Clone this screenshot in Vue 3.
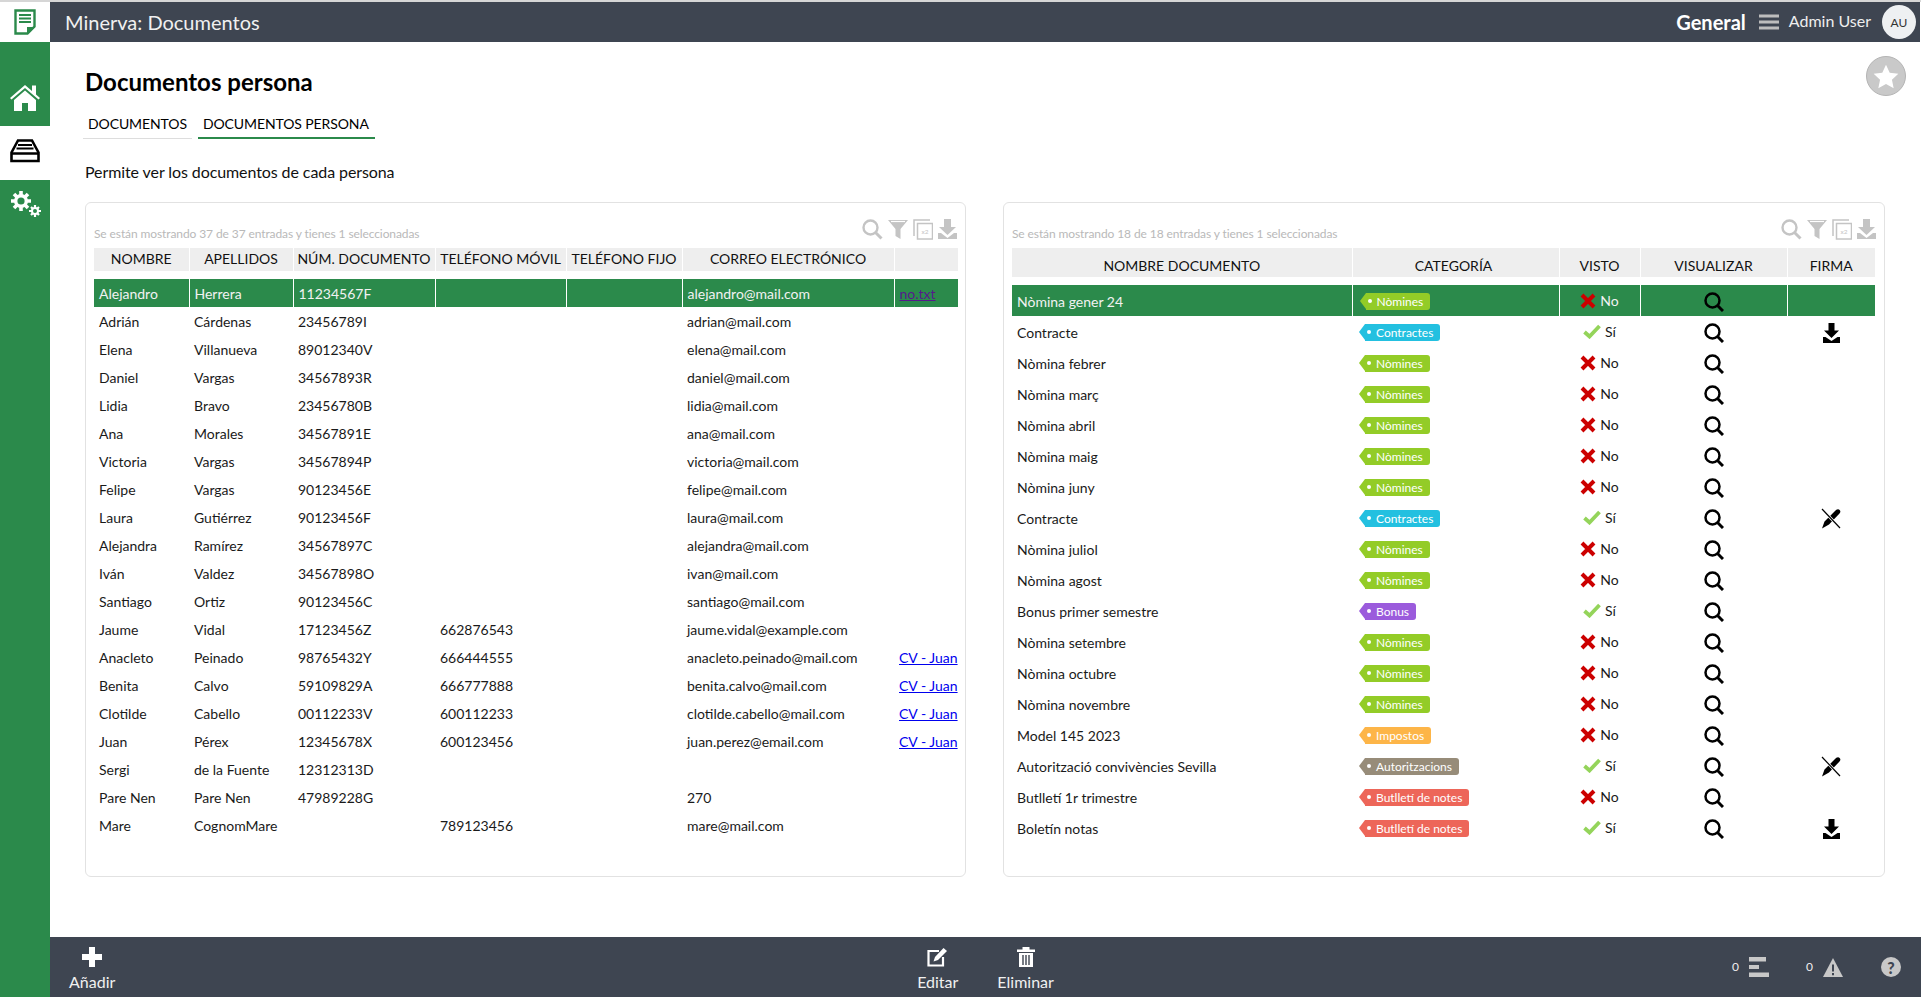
<template>
  <div class="app">
    <aside class="sidebar">
      <div class="side-logo">
        <svg width="22" height="26" viewBox="0 0 22 26"><path d="M1.500 1.500h19v16l-7 7h-12z" fill="#fff" stroke="#2b8a4b" stroke-width="2.400"/><path d="M13 25v-7h8z" fill="#2b8a4b"/><path d="M5 6h12M5 9.500h12M5 13h12" stroke="#2b8a4b" stroke-width="2"/></svg>
      </div>
      <div class="side-item home">
        <svg width="30" height="27" viewBox="0 0 30 27"><path d="M15 1 0 14l1.500 1.500L15 4 28.500 15.500 30 14l-4-3.500V1.500h-4v5.500z" fill="#fff"/><path d="M15 6.500 4 16v11h8v-8h6v8h8V16z" fill="#fff"/></svg>
      </div>
      <div class="side-item inbox">
        <svg width="30" height="24" viewBox="0 0 30 24"><path d="M8 1.500h14l6.500 12v8.500h-27v-8.500z" fill="none" stroke="#000" stroke-width="2.600"/><path d="M8 6h14M6.500 9.500h17" stroke="#000" stroke-width="2"/><path d="M2 14.500h26" stroke="#000" stroke-width="2.500"/></svg>
      </div>
      <div class="side-item gears">
        <svg width="31" height="26" viewBox="0 0 31 26"><g fill="#fff"><circle cx="11" cy="10" r="7"/><g stroke="#fff" stroke-width="3.600"><path d="M11 0v20M1 10h20M4 3l14 14M18 3 4 17"/></g><circle cx="25" cy="20" r="4"/><g stroke="#fff" stroke-width="2.200"><path d="M25 14v12M19 20h12M21 16l8 8M29 16l-8 8"/></g></g><circle cx="11" cy="10" r="3.600" fill="#2b8a4b"/><circle cx="25" cy="20" r="2" fill="#2b8a4b"/></svg>
      </div>
    </aside>

    <div class="main">
      <header class="topbar">
        <div class="app-title">Minerva: Documentos</div>
        <div class="top-right">
          <span class="general">General</span>
          <svg class="burger" width="20" height="16" viewBox="0 0 20 16"><path d="M0 2h20M0 8h20M0 14h20" stroke="#bdbdbd" stroke-width="3"/></svg>
          <span class="user">Admin User</span>
          <span class="avatar">AU</span>
        </div>
      </header>

      <main class="content">
        <div class="title-row">
          <h1>Documentos persona</h1>
          <div class="fav">
            <svg width="26" height="25" viewBox="0 0 30 29"><path d="m15 1 4.300 9.200 10 1.200-7.400 6.900 2 9.900L15 23.300l-8.900 4.900 2-9.900-7.400-6.900 10-1.200z" fill="#fff"/></svg>
          </div>
        </div>

        <nav class="tabs">
          <a class="tab">DOCUMENTOS</a>
          <a class="tab active">DOCUMENTOS PERSONA</a>
        </nav>

        <p class="desc">Permite ver los documentos de cada persona</p>

        <div class="panels">
          <section class="panel">
            <div class="panel-top">
              <span class="status">Se están mostrando 37 de 37 entradas y tienes 1 seleccionadas</span>
              <div class="tools">
                <svg width="21" height="21" viewBox="0 0 21 21"><circle cx="8.500" cy="8.500" r="7" fill="none" stroke="#c4c4c4" stroke-width="2.400"/><path d="m13.500 13.500 6 6" stroke="#c4c4c4" stroke-width="3"/></svg>
                <svg width="20" height="21" viewBox="0 0 20 21"><path d="M0 1h20l-7.500 9v10l-5-3v-7z" fill="#c4c4c4"/><path d="M3 2.500h14" stroke="#fff" stroke-width="1.200"/></svg>
                <svg width="20" height="21" viewBox="0 0 20 21"><path d="M1 17V1h16" fill="none" stroke="#c4c4c4" stroke-width="1.500"/><rect x="4.500" y="4.500" width="15" height="15.500" fill="#fff" stroke="#c4c4c4" stroke-width="1.500"/><text x="12" y="15" font-size="6.500" fill="#c4c4c4" text-anchor="middle" font-family="Lato">x2</text></svg>
                <svg width="19" height="21" viewBox="0 0 19 21"><path d="M6 0h7v8h5l-8.500 8L1 8h5z" fill="#c4c4c4"/><path d="M0 14h3l6.500 5 6.500-5h3v6H0z" fill="#c4c4c4"/></svg>
              </div>
            </div>
            <table class="grid people">
              <colgroup>
                <col v-for="w in peopleCols" :key="w" :style="{ width: w + 'px' }" />
              </colgroup>
              <thead>
                <tr><th>NOMBRE</th><th>APELLIDOS</th><th>NÚM. DOCUMENTO</th><th>TELÉFONO MÓVIL</th><th>TELÉFONO FIJO</th><th>CORREO ELECTRÓNICO</th><th></th></tr>
              </thead>
              <tbody>
                <tr v-for="(p, i) in people" :key="i" :class="{ selected: i === 0 }">
                  <td>{{ p[0] }}</td>
                  <td>{{ p[1] }}</td>
                  <td>{{ p[2] }}</td>
                  <td>{{ p[3] }}</td>
                  <td></td>
                  <td>{{ p[4] }}</td>
                  <td><a v-if="p[5]" class="doc-link" :class="{ visited: i === 0 }">{{ p[5] }}</a></td>
                </tr>
              </tbody>
            </table>
          </section>

          <section class="panel">
            <div class="panel-top">
              <span class="status">Se están mostrando 18 de 18 entradas y tienes 1 seleccionadas</span>
              <div class="tools">
                <svg width="21" height="21" viewBox="0 0 21 21"><circle cx="8.500" cy="8.500" r="7" fill="none" stroke="#c4c4c4" stroke-width="2.400"/><path d="m13.500 13.500 6 6" stroke="#c4c4c4" stroke-width="3"/></svg>
                <svg width="20" height="21" viewBox="0 0 20 21"><path d="M0 1h20l-7.500 9v10l-5-3v-7z" fill="#c4c4c4"/><path d="M3 2.500h14" stroke="#fff" stroke-width="1.200"/></svg>
                <svg width="20" height="21" viewBox="0 0 20 21"><path d="M1 17V1h16" fill="none" stroke="#c4c4c4" stroke-width="1.500"/><rect x="4.500" y="4.500" width="15" height="15.500" fill="#fff" stroke="#c4c4c4" stroke-width="1.500"/><text x="12" y="15" font-size="6.500" fill="#c4c4c4" text-anchor="middle" font-family="Lato">x2</text></svg>
                <svg width="19" height="21" viewBox="0 0 19 21"><path d="M6 0h7v8h5l-8.500 8L1 8h5z" fill="#c4c4c4"/><path d="M0 14h3l6.500 5 6.500-5h3v6H0z" fill="#c4c4c4"/></svg>
              </div>
            </div>
            <table class="grid docs">
              <colgroup>
                <col v-for="w in docCols" :key="w" :style="{ width: w + 'px' }" />
              </colgroup>
              <thead>
                <tr><th>NOMBRE DOCUMENTO</th><th class="cat-head">CATEGORÍA</th><th>VISTO</th><th>VISUALIZAR</th><th>FIRMA</th></tr>
              </thead>
              <tbody>
                <tr v-for="(d, i) in docs" :key="i" :class="{ selected: i === 0 }">
                  <td>{{ d.name }}</td>
                  <td><span class="tag" :class="d.cat">{{ catLabels[d.cat] }}</span></td>
                  <td class="center">
                    <span class="seen">
                      <svg v-if="d.seen" width="18" height="15" viewBox="0 0 18 15"><path d="m1.500 8 5 4.500L16.500 2" fill="none" stroke="#94d45a" stroke-width="3.800"/></svg>
                      <svg v-else width="16" height="16" viewBox="0 0 16 16"><path d="m2 2 12 12M14 2 2 14" stroke="#cc0000" stroke-width="4"/></svg>
                      {{ d.seen ? 'Sí' : 'No' }}
                    </span>
                  </td>
                  <td class="center">
                    <svg class="lens" width="20" height="20" viewBox="0 0 20 20"><circle cx="8.500" cy="8.500" r="7" fill="none" stroke="#000" stroke-width="2.500"/><path d="m13.500 13.500 5.500 5.500" stroke="#000" stroke-width="3"/></svg>
                  </td>
                  <td class="center">
                    <svg v-if="d.sign === 'down'" class="lens" width="17" height="20" viewBox="0 0 17 20"><path d="M5.500 0h6v7.500H16L8.500 15 1 7.500h4.500z" fill="#000"/><path d="M0 14h2.500l6 4 6-4H17v6H0z" fill="#000"/></svg>
                    <svg v-else-if="d.sign === 'pen'" class="lens" width="20" height="21" viewBox="0 0 20 21"><path d="M1 20.500 3.500 13.500 13.500 3.500Q16 .5 18 1.500 20.500 3 18.500 5.500L8 16.500z" fill="#000"/><path d="m1 1 18 19" stroke="#fff" stroke-width="2.600"/><path d="m1 1 18 19" stroke="#000" stroke-width="1.200"/></svg>
                  </td>
                </tr>
              </tbody>
            </table>
          </section>
        </div>
      </main>

      <footer class="actions">
        <div class="act-left">
          <div class="act">
            <svg width="20" height="20" viewBox="0 0 20 20"><path d="M7 0h6v7h7v6h-7v7H7v-7H0V7h7z" fill="#fff"/></svg>
            <span>Añadir</span>
          </div>
        </div>
        <div class="act-center">
          <div class="act">
            <svg width="21" height="20" viewBox="0 0 21 20"><path d="M12 4H1.500v14.500H16V10" fill="none" stroke="#fff" stroke-width="2.200"/><path d="m16.500 1 3.500 3-9 9-4.500 1.500L8 10z" fill="#fff"/></svg>
            <span>Editar</span>
          </div>
          <div class="act">
            <svg width="18" height="20" viewBox="0 0 18 20"><path d="M0 2.500h5.500V0h7v2.500H18V5H0zM2 6h14v14H2z" fill="#fff"/><path d="M6 8v10M9 8v10M12 8v10" stroke="#3e4551" stroke-width="1.400"/></svg>
            <span>Eliminar</span>
          </div>
        </div>
        <div class="act-right">
          <span class="count">0</span>
          <svg width="20" height="20" viewBox="0 0 20 20"><path d="M0 0h17v4.500H0zM0 8h10v4H0zM0 15.500h20V20H0z" fill="#c8c8c8"/></svg>
          <span class="count second">0</span>
          <svg width="20" height="19" viewBox="0 0 20 19"><path d="M10 0 20 19H0z" fill="#c8c8c8"/><path d="M10 6.500v7M10 15v2.300" stroke="#3e4551" stroke-width="2"/></svg>
          <span class="help">?</span>
        </div>
      </footer>
    </div>
  </div>
</template>

<script setup>
const peopleCols = [95, 104, 142, 131, 116, 212, 64]
const docCols = [340, 207, 81, 147, 88]

const people = [
  ['Alejandro', 'Herrera', '11234567F', '', 'alejandro@mail.com', 'no.txt'],
  ['Adrián', 'Cárdenas', '23456789I', '', 'adrian@mail.com'],
  ['Elena', 'Villanueva', '89012340V', '', 'elena@mail.com'],
  ['Daniel', 'Vargas', '34567893R', '', 'daniel@mail.com'],
  ['Lidia', 'Bravo', '23456780B', '', 'lidia@mail.com'],
  ['Ana', 'Morales', '34567891E', '', 'ana@mail.com'],
  ['Victoria', 'Vargas', '34567894P', '', 'victoria@mail.com'],
  ['Felipe', 'Vargas', '90123456E', '', 'felipe@mail.com'],
  ['Laura', 'Gutiérrez', '90123456F', '', 'laura@mail.com'],
  ['Alejandra', 'Ramírez', '34567897C', '', 'alejandra@mail.com'],
  ['Iván', 'Valdez', '34567898O', '', 'ivan@mail.com'],
  ['Santiago', 'Ortiz', '90123456C', '', 'santiago@mail.com'],
  ['Jaume', 'Vidal', '17123456Z', '662876543', 'jaume.vidal@example.com'],
  ['Anacleto', 'Peinado', '98765432Y', '666444555', 'anacleto.peinado@mail.com', 'CV - Juan'],
  ['Benita', 'Calvo', '59109829A', '666777888', 'benita.calvo@mail.com', 'CV - Juan'],
  ['Clotilde', 'Cabello', '00112233V', '600112233', 'clotilde.cabello@mail.com', 'CV - Juan'],
  ['Juan', 'Pérex', '12345678X', '600123456', 'juan.perez@email.com', 'CV - Juan'],
  ['Sergi', 'de la Fuente', '12312313D', '', ''],
  ['Pare Nen', 'Pare Nen', '47989228G', '', '270'],
  ['Mare', 'CognomMare', '', '789123456', 'mare@mail.com']
]

const catLabels = {
  nomines: 'Nòmines',
  contractes: 'Contractes',
  bonus: 'Bonus',
  impostos: 'Impostos',
  autor: 'Autoritzacions',
  butlleti: 'Butlletí de notes'
}

const docs = [
  { name: 'Nòmina gener 24', cat: 'nomines', seen: false },
  { name: 'Contracte', cat: 'contractes', seen: true, sign: 'down' },
  { name: 'Nòmina febrer', cat: 'nomines', seen: false },
  { name: 'Nòmina març', cat: 'nomines', seen: false },
  { name: 'Nòmina abril', cat: 'nomines', seen: false },
  { name: 'Nòmina maig', cat: 'nomines', seen: false },
  { name: 'Nòmina juny', cat: 'nomines', seen: false },
  { name: 'Contracte', cat: 'contractes', seen: true, sign: 'pen' },
  { name: 'Nòmina juliol', cat: 'nomines', seen: false },
  { name: 'Nòmina agost', cat: 'nomines', seen: false },
  { name: 'Bonus primer semestre', cat: 'bonus', seen: true },
  { name: 'Nòmina setembre', cat: 'nomines', seen: false },
  { name: 'Nòmina octubre', cat: 'nomines', seen: false },
  { name: 'Nòmina novembre', cat: 'nomines', seen: false },
  { name: 'Model 145 2023', cat: 'impostos', seen: false },
  { name: 'Autorització convivències Sevilla', cat: 'autor', seen: true, sign: 'pen' },
  { name: 'Butlletí 1r trimestre', cat: 'butlleti', seen: false },
  { name: 'Boletín notas', cat: 'butlleti', seen: true, sign: 'down' }
]
</script>

<style>
html, body { margin: 0; background: #fff; }
</style>

<style scoped>
.app {
  display: grid;
  grid-template-columns: 50px 1fr;
  width: 1921px;
  height: 997px;
  overflow: hidden;
  font-family: Lato, sans-serif;
  font-size: 14px;
  color: #111;
  border-top: 2px solid #d6d6d6;
  box-sizing: border-box;
}

.sidebar {
  display: flex;
  flex-direction: column;
  background: #2b8a4b;
}
.side-logo {
  height: 40px;
  background: #fff;
  display: flex;
  align-items: center;
  justify-content: center;
}
.side-item { display: flex; justify-content: center; }
.home { height: 84px; padding-top: 42px; box-sizing: border-box; }
.inbox { height: 54px; background: #fff; padding-top: 13px; box-sizing: border-box; }
.gears { padding-top: 11px; }

.main { display: flex; flex-direction: column; min-width: 0; }

.topbar {
  height: 40px;
  flex: none;
  margin-right: 1px;
  background: #3e4551;
  color: #fff;
  display: flex;
  align-items: center;
  justify-content: space-between;
  padding: 0 4px 0 15px;
}
.app-title { font-size: 20px; color: #f0f0f0; }
.top-right { display: flex; align-items: center; }
.general { font-size: 20px; font-weight: 700; }
.burger { margin: 0 10px 0 13px; }
.user { font-size: 16px; color: #eee; margin-top: -4px; }
.avatar {
  width: 34px;
  height: 34px;
  margin-left: 11px;
  border-radius: 50%;
  background: #eef0f2;
  color: #333;
  font-size: 12px;
  display: flex;
  align-items: center;
  justify-content: center;
}

.content { flex: 1; padding: 0 36px 0 35px; min-height: 0; }

.title-row {
  display: flex;
  justify-content: space-between;
  align-items: flex-start;
  padding-top: 14px;
  height: 53px;
  box-sizing: border-box;
}
h1 {
  margin: 11px 0 0;
  font-size: 24px;
  line-height: 30px;
  font-weight: 700;
  color: #000;
}
.fav {
  width: 40px;
  height: 40px;
  margin-right: -21px;
  border-radius: 50%;
  background: #c9c9c9;
  border: 1px solid #b4b4b4;
  box-sizing: border-box;
  display: flex;
  align-items: center;
  justify-content: center;
}

.tabs { display: flex; gap: 6px; margin: 16px 0 0 -2px; }
.tab {
  font-size: 14px;
  line-height: 26px;
  padding: 0 5px;
  border-bottom: 1px solid #ddd;
  color: #000;
  letter-spacing: -0.1px;
}
.tab.active { border-bottom: 2px solid #2b8a4b; padding: 0 6px 0 5px; }

.desc { margin: 21px 0 0; font-size: 16px; line-height: 24px; color: #111; letter-spacing: -0.09px; }

.panels {
  display: grid;
  grid-template-columns: 881px 882px;
  gap: 37px;
  margin-top: 18px;
}
.panel {
  height: 675px;
  border: 1px solid #e2e2e2;
  border-radius: 6px;
  padding: 14px 8px 0;
  box-sizing: border-box;
}
.panel-top {
  display: flex;
  justify-content: space-between;
  align-items: center;
  height: 24px;
  margin-bottom: 7px;
}
.status { font-size: 12px; color: #b9b9b9; padding-top: 8px; letter-spacing: -0.1px; }
.tools { display: flex; gap: 5px; margin-top: 1px; }

.grid { border-collapse: collapse; table-layout: fixed; width: 100%; }
.grid th {
  box-sizing: border-box;
  background: #eee;
  font-weight: 400;
  font-size: 14px;
  color: #111;
  border-right: 1px solid #fff;
  padding: 0;
  white-space: nowrap;
}
.grid th:last-child, .grid td:last-child { border-right: 0; }
.grid thead::after { content: ''; display: table-row; height: 8px; }
.grid td { padding: 0 5px; white-space: nowrap; overflow: hidden; color: #1a1a1a; }
.grid tr.selected td {
  background: #2b8a4b;
  color: #f2f2f2;
  border-right: 1px solid #fff;
}
.grid tr.selected td:last-child { border-right: 0; }

.people th { height: 23px; padding-bottom: 3px; }
.people td { height: 28px; }
.docs { width: 863px; margin-top: 1px; }
.docs th { height: 29px; padding-top: 5px; }
.docs td { height: 31px; padding-top: 2px; box-sizing: border-box; }
.docs th.cat-head { padding-right: 4px; }
.center { text-align: center; }

.doc-link { color: #0000ee; text-decoration: underline; }
.doc-link.visited { color: #551a8b; }

.tag {
  position: relative;
  top: -1px;
  display: inline-block;
  height: 17px;
  line-height: 18px;
  margin-left: 8px;
  padding: 0 7px 0 11px;
  border-radius: 0 3px 3px 0;
  color: #fff;
  font-size: 12px;
  vertical-align: middle;
}
.tag::before {
  content: '';
  position: absolute;
  left: -6px;
  top: 0;
  width: 0;
  height: 0;
  border-style: solid;
  border-width: 8.500px 6px 8.500px 0;
  border-color: transparent;
  border-right-color: inherit;
}
.tag::after {
  content: '';
  position: absolute;
  left: 2px;
  top: 6px;
  width: 4px;
  height: 4px;
  border-radius: 50%;
  background: #fff;
}
.nomines { background: #93cc27; border-color: #93cc27; }
.contractes { background: #23c0e0; border-color: #23c0e0; }
.bonus { background: #9b5bdc; border-color: #9b5bdc; }
.impostos { background: #fdb548; border-color: #fdb548; }
.autor { background: #978c79; border-color: #978c79; }
.butlleti { background: #ed6659; border-color: #ed6659; }

.seen { display: inline-flex; align-items: center; gap: 4px; }
.seen svg { margin-top: 1px; }
.lens { display: block; margin: 0 auto; }

.actions {
  height: 60px;
  flex: none;
  background: #3e4551;
  display: grid;
  grid-template-columns: 1fr auto 1fr;
  color: #f0f0f0;
}
.act-left { display: flex; padding-left: 19px; }
.act-center { display: flex; gap: 39px; }
.act {
  display: flex;
  flex-direction: column;
  align-items: center;
  padding-top: 10px;
  font-size: 16px;
  line-height: 20px;
  gap: 5px;
}
.act-right {
  display: flex;
  justify-content: flex-end;
  align-items: center;
  padding: 0 20px 0 0;
}
.count { font-size: 12px; color: #eee; margin-right: 10px; margin-top: -2px; }
.count.second { margin-left: 37px; }
.help {
  width: 20px;
  height: 20px;
  margin-left: 38px;
  border-radius: 50%;
  background: #c8c8c8;
  color: #3e4551;
  font-size: 16px;
  font-weight: 900;
  display: flex;
  align-items: center;
  justify-content: center;
}
</style>
